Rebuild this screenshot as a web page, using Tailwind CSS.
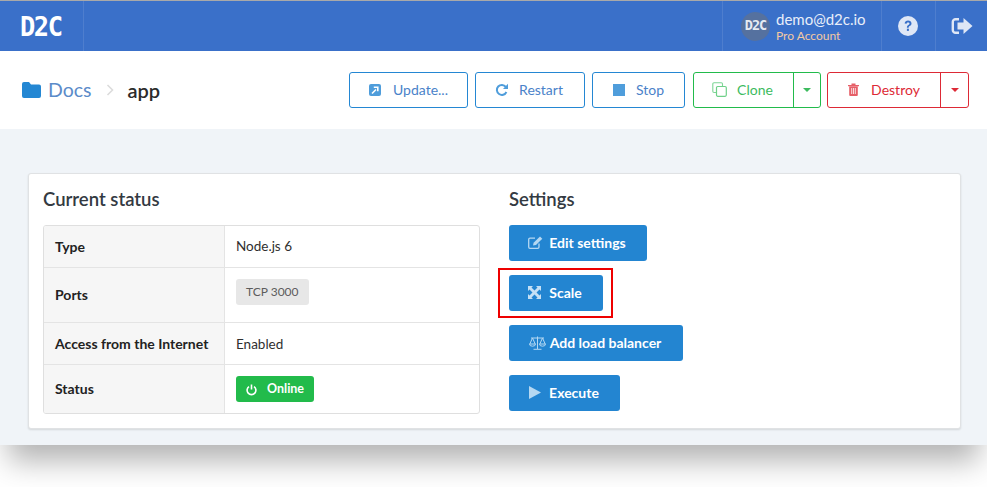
<!DOCTYPE html>
<html lang="en">
<head>
    <meta charset="UTF-8">
    <meta name="viewport" content="width=device-width, initial-scale=1.0">
    <title>D2C - app</title>
    <script src="https://cdn.jsdelivr.net/npm/@tailwindcss/browser@4"></script>
</head>
<body class="bg-white font-['Lato',sans-serif] text-[#2f2f2f] overflow-hidden">
<div class="w-[987px] h-[487px] overflow-hidden">
    <!-- Top bar -->
    <nav class="h-[51px] bg-[#3a70c9] border-t border-[#a9a9a9] flex items-stretch text-white">
        <div class="w-[84px] border-r border-white/10 flex items-center pl-[20px]">
            <span class="font-['DejaVu_Sans_Mono',monospace] font-bold text-[27px] leading-none tracking-[-1.500px] scale-x-[0.94] origin-left">D2C</span>
        </div>
        <div class="flex-1"></div>
        <div class="w-[160px] border-x border-white/10 flex items-center pl-[18px] gap-[6px]">
            <div class="w-[29px] h-[29px] rounded-full bg-[#55719f] flex items-center justify-center">
                <span class="font-['DejaVu_Sans_Mono',monospace] font-bold text-[13.500px] leading-none tracking-[-1px] text-[#e6ebf3]">D2C</span>
            </div>
            <div class="flex flex-col">
                <span class="text-[15px] leading-[18px] text-[#e8eef9]">demo@d2c.io</span>
                <span class="text-[12px] leading-[15px] text-[#f3c9a2]">Pro Account</span>
            </div>
        </div>
        <div class="w-[54px] pr-[2px] border-r border-white/10 flex items-center justify-center">
            <svg class="w-[20px] h-[20px]" viewBox="0 0 20 20">
                <circle cx="10" cy="10" r="10" fill="#dfe7f6"/>
                <path d="M6.600 7.600C6.800 5.600 8.300 4.600 10.100 4.600c1.900 0 3.400 1.200 3.400 2.900 0 1.400-.9 2-1.800 2.600-.7.500-1 .8-1 1.600H8.900c0-1.400.5-2 1.400-2.600.7-.5 1.200-.8 1.200-1.500 0-.7-.6-1.100-1.400-1.100-.9 0-1.400.5-1.500 1.300z" fill="#3a70c9"/>
                <rect x="8.900" y="12.700" width="2" height="2.200" fill="#3a70c9"/>
            </svg>
        </div>
        <div class="w-[51px] flex items-center justify-center">
            <svg class="w-[22px] h-[18px]" viewBox="0 0 22 18">
                <path d="M8 2.200H4.500A2.700 2.700 0 0 0 1.800 5v8a2.700 2.700 0 0 0 2.700 2.800H8" fill="none" stroke="#dfe7f6" stroke-width="2.400"/>
                <path d="M12.500 1 21.500 9l-9 8v-4.500H6.500v-7h6z" fill="#dfe7f6"/>
            </svg>
        </div>
    </nav>

    <!-- Breadcrumb and actions -->
    <header class="h-[78px] flex items-center justify-between pl-[22px] pr-[18px]">
        <div class="flex items-center">
            <svg class="w-[19px] h-[16px] mr-[7px]" viewBox="0 0 19 16">
                <path d="M2 0h5l2 2.500h8a2 2 0 0 1 2 2V14a2 2 0 0 1-2 2H2a2 2 0 0 1-2-2V2a2 2 0 0 1 2-2z" fill="#2487d3"/>
            </svg>
            <span class="text-[19.500px] text-[#5b8bc9]">Docs</span>
            <svg class="w-[8px] h-[12px] mx-[14px]" viewBox="0 0 8 12">
                <path d="M1.500 1 6.500 6l-5 5" fill="none" stroke="#dcdcdc" stroke-width="1.600"/>
            </svg>
            <span class="text-[20px] font-semibold text-[#2b2b2b]">app</span>
        </div>
        <div class="flex items-center gap-[7px] text-[14px] leading-[18px]">
            <button class="w-[119px] h-[36px] pb-[1px] border border-[#2487d3] rounded-[3px] flex items-center justify-center gap-[12px] text-[#4a82c9]">
                <svg class="w-[12px] h-[12px]" viewBox="0 0 12 12">
                    <rect width="12" height="12" rx="2" fill="#4f9ddb"/>
                    <path d="M3 9.500 7 5.500M4.800 3.200h4v4" fill="none" stroke="#fff" stroke-width="1.600"/>
                </svg>
                Update...
            </button>
            <button class="w-[110px] h-[36px] pb-[1px] pr-[2px] border border-[#2487d3] rounded-[3px] flex items-center justify-center gap-[10px] text-[#4a82c9]">
                <svg class="w-[14px] h-[14px]" viewBox="0 0 14 14">
                    <path d="M11.400 9A5 5 0 1 1 10.800 3.800" fill="none" stroke="#4f9ddb" stroke-width="2"/>
                    <path d="M13 .800V6H8z" fill="#4f9ddb"/>
                </svg>
                Restart
            </button>
            <button class="w-[93px] h-[36px] pb-[1px] border border-[#2487d3] rounded-[3px] flex items-center justify-center gap-[11px] text-[#4a82c9]">
                <span class="w-[12px] h-[12px] bg-[#4f9ddb]"></span>
                Stop
            </button>
            <div class="w-[128px] h-[36px] ml-[1px] border border-[#22bb4b] rounded-[3px] flex items-stretch text-[#3dbb5e]">
                <button class="w-[100px] pb-[1px] pr-[2px] border-r border-[#22bb4b] flex items-center justify-center gap-[10px]">
                    <svg class="w-[15px] h-[15px]" viewBox="0 0 15 15">
                        <path d="M4 10.500H2A1.200 1.200 0 0 1 .800 9.300V2A1.200 1.200 0 0 1 2 .800h7.300A1.200 1.200 0 0 1 10.500 2v2" fill="none" stroke="#7ed596" stroke-width="1.100"/>
                        <rect x="4.500" y="4.500" width="9.800" height="9.800" rx="1.200" fill="none" stroke="#6fd089" stroke-width="1.200"/>
                    </svg>
                    Clone
                </button>
                <div class="flex-1 flex items-center justify-center">
                    <span class="border-x-[4px] border-x-transparent border-t-[4px] border-t-[#3dbb5e]"></span>
                </div>
            </div>
            <div class="w-[142px] h-[36px] ml-[-1px] border border-[#dd2a36] rounded-[3px] flex items-stretch text-[#dd2a36]">
                <button class="w-[113px] pb-[1px] border-r border-[#dd2a36] flex items-center justify-center gap-[12px]">
                    <svg class="w-[11px] h-[13px]" viewBox="0 0 11 13">
                        <path d="M0 2h11v1.200H0zM3.500 2V.500h4V2M1.200 3.500h8.600V12a1 1 0 0 1-1 1H2.200a1 1 0 0 1-1-1z" fill="#e65f68"/>
                        <path d="M3.700 5v6M5.500 5v6M7.300 5v6" stroke="#fff" stroke-width=".8"/>
                    </svg>
                    Destroy
                </button>
                <div class="flex-1 flex items-center justify-center">
                    <span class="border-x-[4px] border-x-transparent border-t-[4px] border-t-[#dd2a36]"></span>
                </div>
            </div>
        </div>
    </header>

    <!-- Main area -->
    <main class="h-[316px] bg-[#f0f4f8] pt-[44px] px-[28px] shadow-[0_24px_28px_-8px_rgba(0,0,0,0.3)]">
        <div class="w-[933px] h-[256px] bg-white rounded-[3px] border border-[#e0e2e4] shadow-[0_1px_2px_rgba(0,0,0,0.12)] pl-[14px] pt-[14px] flex">
            <section class="w-[437px]">
                <h2 class="text-[18.500px] leading-[23px] font-semibold text-[#333a42]">Current status</h2>
                <div class="mt-[14px] h-[189px] border border-[#dfdfdf] rounded-[3px] overflow-hidden grid grid-cols-[181px_1fr] grid-rows-[42px_55px_42px_1fr] text-[13.500px]">
                    <div class="bg-[#f6f6f6] border-r border-b border-[#e4e4e4] pl-[11px] flex items-center font-bold text-[14px] text-[#222]">Type</div>
                    <div class="border-b border-[#e4e4e4] pl-[11px] flex items-center">Node.js 6</div>
                    <div class="bg-[#f6f6f6] border-r border-b border-[#e4e4e4] pl-[11px] pb-[2px] flex items-center font-bold text-[14px] text-[#222]">Ports</div>
                    <div class="border-b border-[#e4e4e4] pl-[11px] pt-[11px]">
                        <span class="inline-flex items-center h-[26px] px-[10px] rounded-[3px] bg-[#e7e7e7] text-[#5c5c5c] text-[12px]">TCP 3000</span>
                    </div>
                    <div class="bg-[#f6f6f6] border-r border-b border-[#e4e4e4] pl-[11px] flex items-center font-bold text-[14px] text-[#222]">Access from the Internet</div>
                    <div class="border-b border-[#e4e4e4] pl-[11px] pt-[2px] flex items-center">Enabled</div>
                    <div class="bg-[#f6f6f6] border-r border-[#e4e4e4] pl-[11px] pb-[2px] flex items-center font-bold text-[14px] text-[#222]">Status</div>
                    <div class="pl-[11px] flex items-center">
                        <span class="inline-flex items-center gap-[10px] h-[26px] w-[78px] pl-[10px] pt-[1px] rounded-[3px] bg-[#22bb4b] text-white text-[12.500px] font-bold">
                            <svg class="w-[11px] h-[12px]" viewBox="0 0 11 12">
                                <path d="M3 2.600a4.400 4.400 0 1 0 5 0" fill="none" stroke="#fff" stroke-width="1.600"/>
                                <path d="M5.500 .500v5" stroke="#fff" stroke-width="1.600"/>
                            </svg>
                            Online
                        </span>
                    </div>
                </div>
            </section>
            <section class="ml-[29px]">
                <h2 class="text-[18.500px] leading-[23px] font-semibold text-[#333a42]">Settings</h2>
                <div class="mt-[14px] flex flex-col items-start gap-[14px] text-[14px] leading-[18px] font-bold text-white">
                    <button class="w-[138px] h-[36px] pb-[1px] pr-[2px] rounded-[3px] bg-[#2385d1] flex items-center justify-center gap-[6px]">
                        <svg class="w-[15px] h-[13px]" viewBox="0 0 15 13">
                            <path d="M11 7.500V11a1.300 1.300 0 0 1-1.300 1.300H2A1.300 1.300 0 0 1 .7 11V3.500A1.300 1.300 0 0 1 2 2.200h5" fill="none" stroke="#b5d8f2" stroke-width="1.300"/>
                            <path d="M5 9.500 5.600 6.800 12 .5 14.300 2.800 8 9z" fill="#b5d8f2"/>
                        </svg>
                        Edit settings
                    </button>
                    <div class="relative">
                        <button class="w-[94px] h-[36px] pb-[1px] pr-[2px] rounded-[3px] bg-[#2385d1] flex items-center justify-center gap-[8px]">
                            <svg class="w-[13px] h-[13px]" viewBox="0 0 13 13">
                                <path d="M0 0h5L3.500 1.500 6.500 4.500 9.500 1.500 8 0h5v5L11.500 3.500 8.500 6.500 11.500 9.500 13 8v5H8L9.500 11.500 6.500 8.500 3.500 11.500 5 13H0V8L1.500 9.500 4.500 6.500 1.500 3.500 0 5z" fill="#c5e0f5"/>
                            </svg>
                            Scale
                        </button>
                        <div class="absolute left-[-11px] top-[-7px] w-[115px] h-[50px] border-2 border-[#ee0000]"></div>
                    </div>
                    <button class="w-[174px] h-[36px] pb-[1px] pr-[2px] rounded-[3px] bg-[#2385d1] flex items-center justify-center gap-[4px]">
                        <svg class="w-[17px] h-[14px]" viewBox="0 0 17 14">
                            <path d="M8.500 .5V13M4.500 13.300h8M2 2h13M3.500 2 .8 8M3.500 2 6.200 8M13.500 2 10.800 8M13.500 2 16.200 8" fill="none" stroke="#b5d8f2" stroke-width="1"/>
                            <path d="M.5 8h6a3 2.200 0 0 1-6 0zM10.500 8h6a3 2.200 0 0 1-6 0z" fill="none" stroke="#b5d8f2" stroke-width="1"/>
                        </svg>
                        Add load balancer
                    </button>
                    <button class="w-[111px] h-[36px] pb-[1px] pr-[1px] rounded-[3px] bg-[#2385d1] flex items-center justify-center gap-[8px]">
                        <svg class="w-[12px] h-[13px]" viewBox="0 0 12 13">
                            <path d="M0 0 12 6.500 0 13z" fill="#b5d8f2"/>
                        </svg>
                        Execute
                    </button>
                </div>
            </section>
        </div>
    </main>
</div>
</body>
</html>
